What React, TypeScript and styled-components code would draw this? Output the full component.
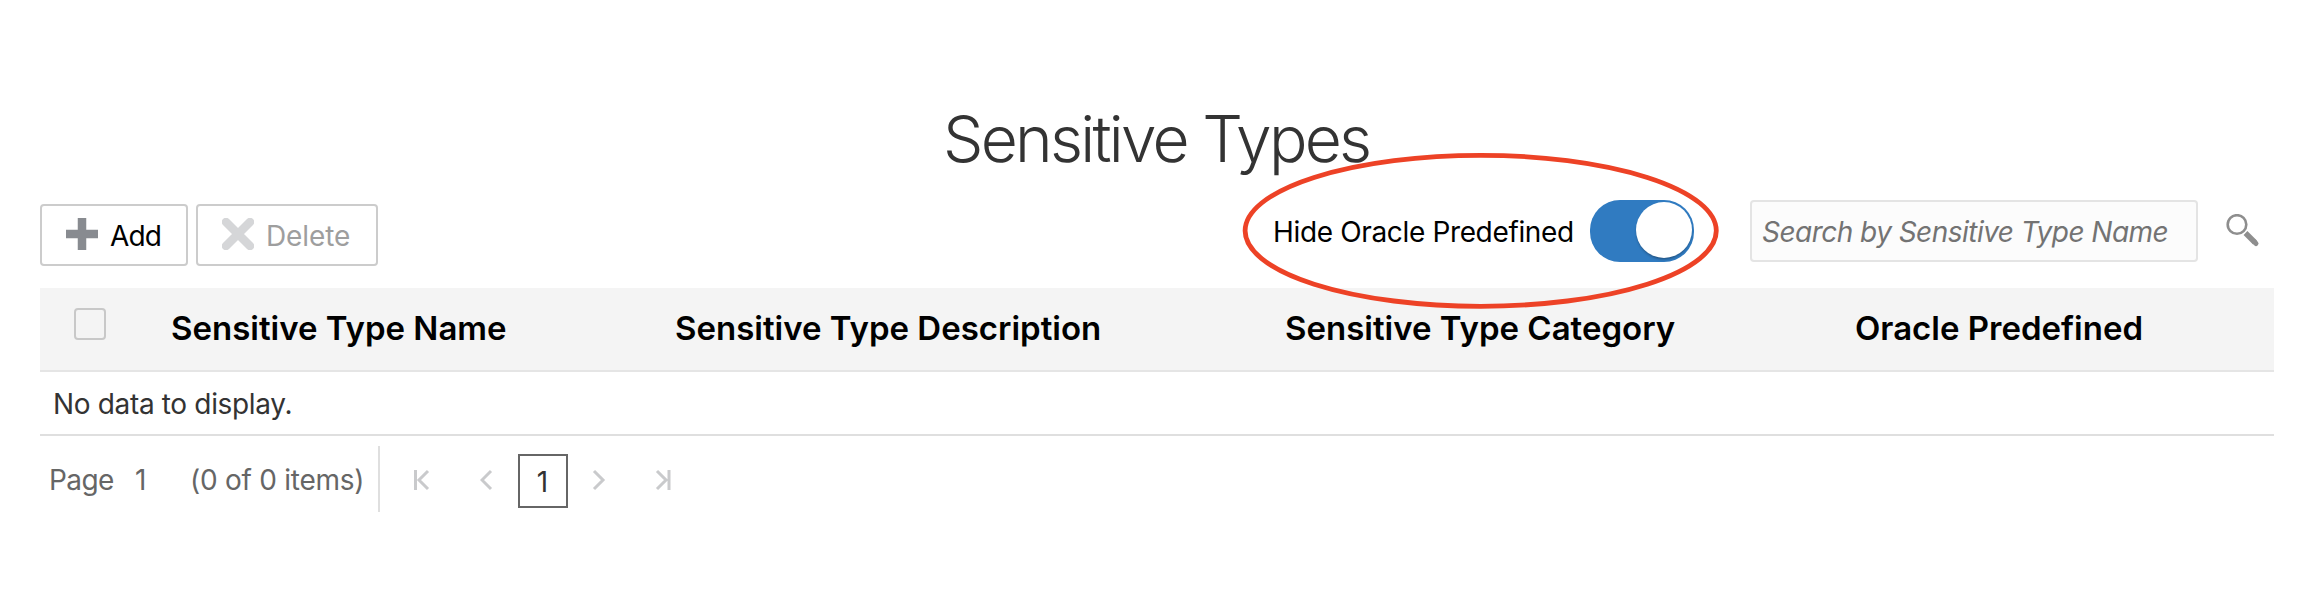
import React from "react";
import styled, { createGlobalStyle } from "styled-components";

const GlobalStyle = createGlobalStyle`
  * { box-sizing: border-box; }
  body {
    margin: 0;
    background: #fff;
    color: #000;
    font-family: Inter, "Liberation Sans", sans-serif;
    font-size: 28px;
    line-height: 34px;
  }
  input::placeholder { color: #737373; opacity: 1; }
`;

const Page = styled.main`
  position: relative;
  height: 596px;
  padding: 97px 24px 0 40px;
  overflow: hidden;
`;

const Title = styled.h1`
  margin: 0 0 1px;
  height: 84px;
  padding-left: 903px;
  font-size: 64px;
  font-weight: 360;
  line-height: 84px;
  letter-spacing: -2.75px;
  color: #333;
  white-space: nowrap;
`;

const Toolbar = styled.div`
  display: flex;
  align-items: flex-start;
  height: 106px;
  padding-top: 18px;
`;

const ToolButton = styled.button<{ $width: number }>`
  display: flex;
  align-items: center;
  gap: 12px;
  width: ${(p) => p.$width}px;
  height: 62px;
  margin: 4px 8px 0 0;
  padding: 0 0 0 24px;
  border: 2px solid #ccc;
  border-radius: 4px;
  background: #fff;
  color: #000;
  font: inherit;
  white-space: nowrap;
  &:disabled { color: #9e9e9e; }
  svg { margin-top: -2px; flex: none; }
`;

const Label = styled.span<{ $spacing?: number }>`
  display: block;
  padding-top: 2px;
  letter-spacing: ${(p) => p.$spacing ?? 0}px;
  white-space: nowrap;
`;

const SwitchGroup = styled.label`
  display: flex;
  align-items: center;
  justify-content: space-between;
  width: 421px;
  height: 62px;
  margin-left: auto;
`;

const Switch = styled.span`
  display: flex;
  justify-content: flex-end;
  width: 104px;
  height: 62px;
  padding: 2px;
  border-radius: 30px;
  background: #307bc1;
`;

const Knob = styled.span`
  width: 56px;
  height: 56px;
  border-radius: 50%;
  background: #fff;
  box-shadow: 0 2px 3px -1px rgba(0, 0, 0, 0.4);
`;

const SearchInput = styled.input`
  width: 448px;
  height: 62px;
  margin-left: 56px;
  padding: 2px 0 0 10px;
  border: 2px solid #e4e4e4;
  border-radius: 4px;
  background: #fcfcfc;
  font: italic 28px Inter, sans-serif;
  letter-spacing: -0.53px;
`;

const SearchButton = styled.button`
  display: flex;
  width: 34px;
  height: 34px;
  margin: 14px 14px 0 28px;
  padding: 0;
  border: 0;
  background: none;
`;

const HeaderRow = styled.div`
  display: grid;
  grid-template-columns: 131px 504px 610px 570px 1fr;
  height: 84px;
  border-bottom: 2px solid #e5e5e5;
  background: #f4f4f4;
`;

const HeaderCell = styled.div`
  padding-top: 20px;
  font-size: 33px;
  font-weight: 600;
  line-height: 40px;
  white-space: nowrap;
`;

const Checkbox = styled.div`
  width: 32px;
  height: 32px;
  margin-left: 34px;
  border: 2px solid #c8c8c8;
  border-radius: 4px;
`;

const EmptyRow = styled.div`
  height: 64px;
  padding: 13px 0 0 13px;
  border-bottom: 2px solid #dfdfdf;
  color: #333;
`;

const Pager = styled.nav`
  display: flex;
  align-items: center;
  height: 66px;
  margin-top: 10px;
  padding-left: 9px;
  color: #666;
`;

const PagerText = styled(Label)<{ $width: number }>`
  width: ${(p) => p.$width}px;
`;

const Divider = styled.span`
  width: 2px;
  height: 66px;
  background: #dfdfdf;
`;

const PagerIcon = styled.svg<{ $left: number }>`
  width: 16px;
  height: 22px;
  margin-top: 2px;
  margin-left: ${(p) => p.$left}px;
  fill: none;
  stroke: #c9cacc;
  stroke-width: 3;
`;

const CurrentPage = styled.span`
  display: flex;
  align-items: center;
  justify-content: center;
  width: 50px;
  height: 54px;
  margin: 4px 0 0 22px;
  padding: 2px 1px 0 0;
  border: 2px solid #666;
  color: #333;
`;

const Highlight = styled.svg`
  position: absolute;
  left: 1240px;
  top: 150px;
  width: 482px;
  height: 162px;
  pointer-events: none;
`;

export default function App() {
  return (
    <Page>
      <GlobalStyle />
      <Title>Sensitive Types</Title>
      <Toolbar>
        <ToolButton $width={148}>
          <svg width="32" height="32" viewBox="0 0 32 32">
            <path d="M16 0v32M0 16h32" stroke="#888b90" strokeWidth="8.5" />
          </svg>
          <Label $spacing={-0.9}>Add</Label>
        </ToolButton>
        <ToolButton $width={182} disabled>
          <svg width="32" height="32" viewBox="0 0 32 32">
            <path d="M4 4l24 24M28 4l-24 24" stroke="#d5d6d8" strokeWidth="8.5" strokeLinecap="round" />
          </svg>
          <Label $spacing={-0.1}>Delete</Label>
        </ToolButton>
        <SwitchGroup>
          <Label $spacing={-0.35}>Hide Oracle Predefined</Label>
          <Switch role="switch" aria-checked="true"><Knob /></Switch>
        </SwitchGroup>
        <SearchInput placeholder="Search by Sensitive Type Name" />
        <SearchButton aria-label="Search">
          <svg width="34" height="34" viewBox="0 0 34 34" fill="none" stroke="#8e8e8e">
            <circle cx="11" cy="10.5" r="9.3" strokeWidth="2.6" />
            <path d="M19.5 19l9.5 9.5" strokeWidth="5.4" />
            <path d="M28 27.5l2 2" strokeWidth="5" strokeLinecap="round" />
          </svg>
        </SearchButton>
      </Toolbar>
      <HeaderRow>
        <HeaderCell><Checkbox /></HeaderCell>
        <HeaderCell>Sensitive Type Name</HeaderCell>
        <HeaderCell>Sensitive Type Description</HeaderCell>
        <HeaderCell>Sensitive Type Category</HeaderCell>
        <HeaderCell>Oracle Predefined</HeaderCell>
      </HeaderRow>
      <EmptyRow><Label $spacing={-0.34}>No data to display.</Label></EmptyRow>
      <Pager>
        <PagerText $width={86} $spacing={-0.6}>Page</PagerText>
        <PagerText $width={55}>1</PagerText>
        <PagerText $width={188} $spacing={-0.25}>(0 of 0 items)</PagerText>
        <Divider />
        <PagerIcon $left={34} viewBox="0 0 16 22"><path d="M1.5 1v20M14 2l-9 9 9 9" /></PagerIcon>
        <PagerIcon $left={50} viewBox="0 0 16 22"><path d="M11 2l-9 9 9 9" /></PagerIcon>
        <CurrentPage>1</CurrentPage>
        <PagerIcon $left={24} viewBox="0 0 16 22"><path d="M2 2l9 9-9 9" /></PagerIcon>
        <PagerIcon $left={47} viewBox="0 0 16 22"><path d="M2 2l9 9-9 9M14 1v20" /></PagerIcon>
      </Pager>
      <Highlight viewBox="0 0 482 162">
        <ellipse cx="240.7" cy="80.8" rx="235.6" ry="75.5" fill="none" stroke="#ed4226" strokeWidth="4.8" />
      </Highlight>
    </Page>
  );
}
